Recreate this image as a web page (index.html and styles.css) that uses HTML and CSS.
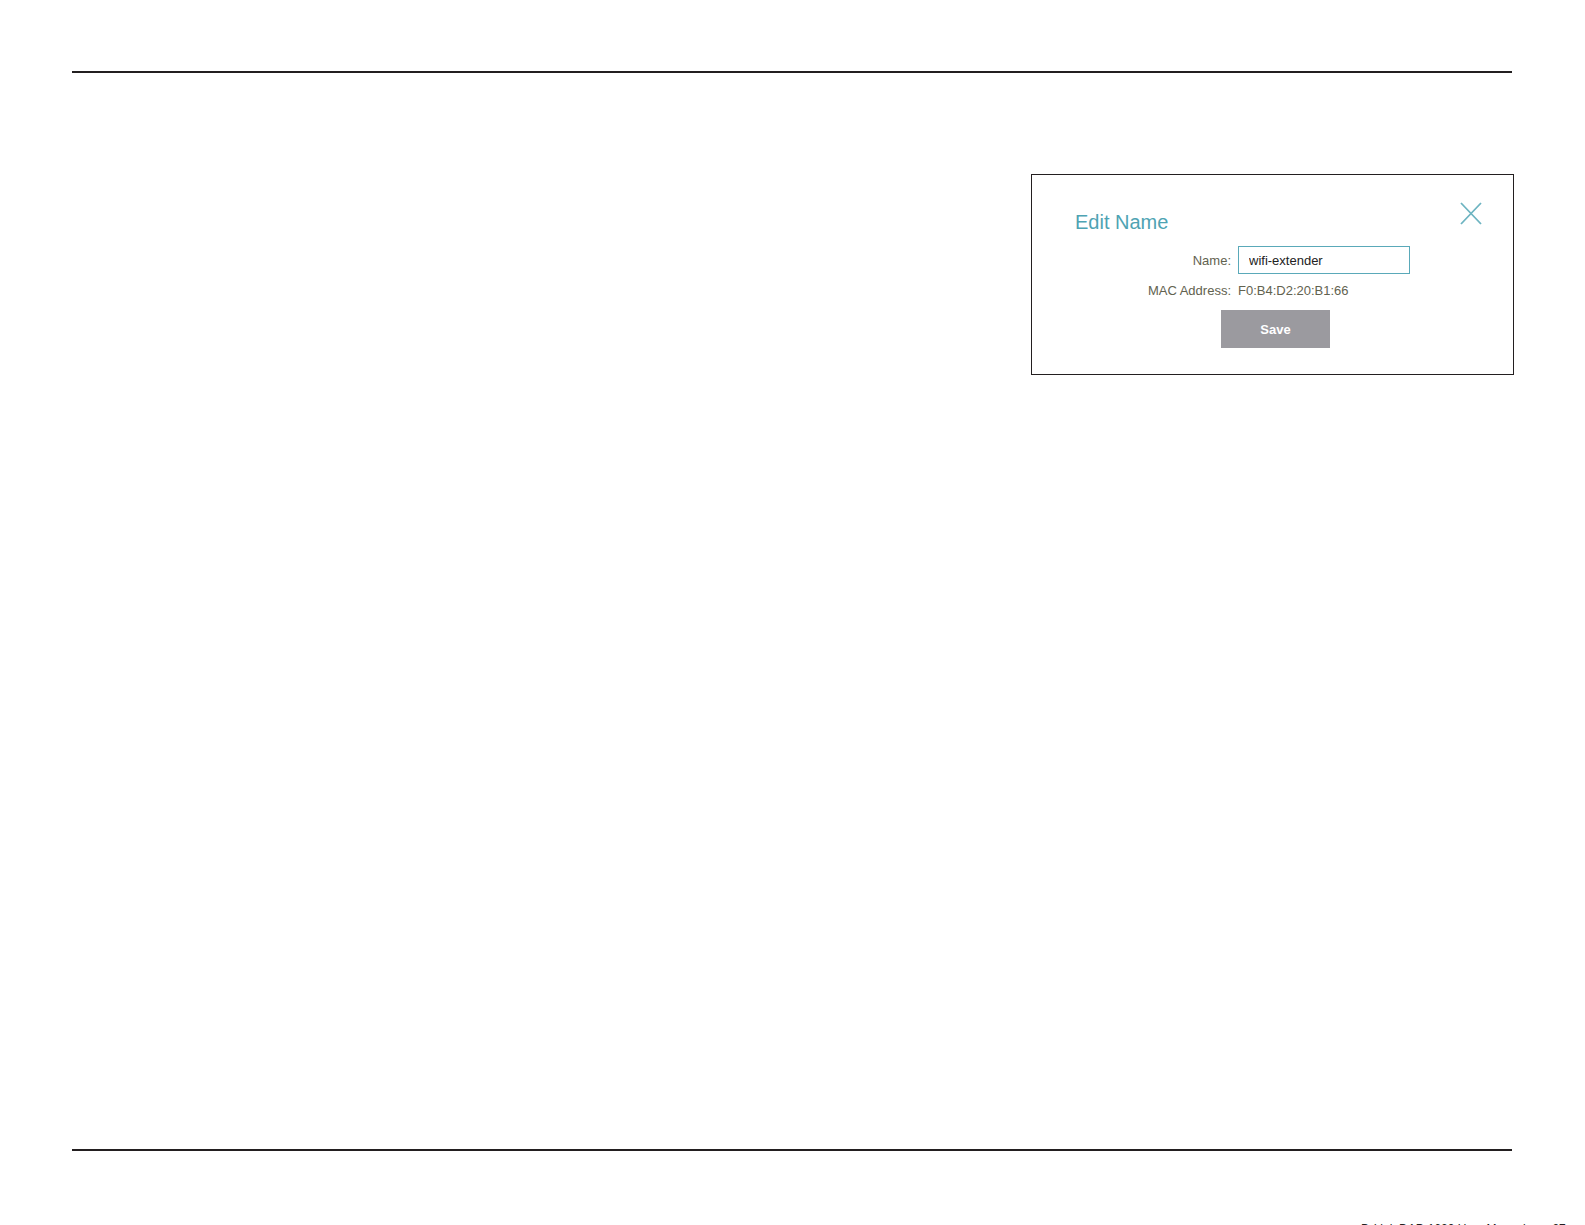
FILE: index.html
```html
<!DOCTYPE html>
<html lang="en">
<head>
  <meta charset="UTF-8">
  <title>Edit Name</title>
  <link rel="stylesheet" href="styles.css">
</head>
<body>

  <div class="page">
    <div class="rule"></div>

    <div class="content">
      <!-- Edit Name dialog -->
      <div class="dialog">
        <h2 class="dialog-title">Edit Name</h2>
        <button class="close" type="button" aria-label="Close">
          <svg width="22" height="23" viewBox="0 0 22 23">
            <path d="M1 1 L21 22 M21 1 L1 22" stroke="#6db4c1" stroke-width="1.8" fill="none"/>
          </svg>
        </button>

        <div class="field">
          <label class="field-label" for="deviceName">Name:</label>
          <input class="field-input" type="text" id="deviceName" value="wifi-extender">
        </div>
        <div class="field field-text">
          <span class="field-label">MAC Address:</span>
          <span class="field-value">F0:B4:D2:20:B1:66</span>
        </div>
        <div class="actions">
          <button class="save" type="button">Save</button>
        </div>
      </div>
    </div>

    <div class="rule"></div>
    <div class="footer">D-Link DAP-1620 User Manual&nbsp;&nbsp;&nbsp;&nbsp;&nbsp;&nbsp;&nbsp;&nbsp;27</div>
  </div>

</body>
</html>
```

FILE: styles.css
```css
* {
  box-sizing: border-box;
}

body {
  margin: 0;
  padding: 0;
  background: #fff;
  font-family: 'Liberation Sans', Arial, sans-serif;
  overflow: hidden;
}

.page {
  display: flex;
  flex-direction: column;
  padding: 71px 73px 0 72px;
}

.rule {
  height: 2px;
  background: #231f20;
  flex-shrink: 0;
}

.content {
  height: 1076px;
  display: flex;
  justify-content: flex-end;
  align-items: flex-start;
  padding-top: 101px;
  margin-right: -2px;
}

.dialog {
  position: relative;
  width: 483px;
  height: 201px;
  border: 1px solid #231f20;
  padding-top: 36px;
}

.dialog-title {
  margin: 0;
  padding-left: 43px;
  font-size: 20px;
  line-height: 23px;
  font-weight: normal;
  color: #4ea3b3;
}

.close {
  position: absolute;
  top: 27px;
  right: 31px;
  width: 22px;
  height: 23px;
  padding: 0;
  border: none;
  background: none;
  cursor: pointer;
}

.close svg {
  display: block;
}

.field {
  display: flex;
  align-items: center;
  margin-top: 12px;
  font-size: 13px;
  color: #62624f;
}

.field-label {
  width: 199px;
  margin-right: 7px;
  text-align: right;
}

.field-input {
  width: 172px;
  height: 28px;
  padding: 0 10px;
  border: 1px solid #5aa9b9;
  font-family: 'Liberation Sans', Arial, sans-serif;
  font-size: 13px;
  color: #222;
  outline: none;
}

.field-text {
  margin-top: 9px;
  line-height: 16px;
}

.actions {
  display: flex;
  justify-content: center;
  padding-left: 6px;
  margin-top: 11px;
}

.save {
  width: 109px;
  height: 38px;
  border: none;
  background: #9b9a9f;
  color: #fff;
  font-family: 'Liberation Sans', Arial, sans-serif;
  font-size: 13px;
  font-weight: bold;
  cursor: pointer;
}

/* page footer sits just under the fold */
.footer {
  margin-top: 71px;
  padding-left: 1289px;
  font-size: 12px;
  line-height: 14px;
  color: #231f20;
  white-space: nowrap;
}
```
